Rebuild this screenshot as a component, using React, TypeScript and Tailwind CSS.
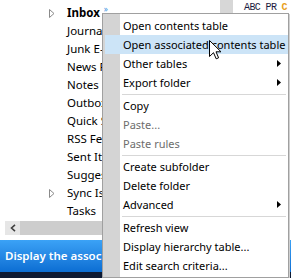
import React from "react";

type MenuEntry =
  | { kind: "item"; label: string; disabled?: boolean; submenu?: boolean; hot?: boolean }
  | { kind: "sep" };

const menu: MenuEntry[] = [
  { kind: "item", label: "Open contents table" },
  { kind: "item", label: "Open associated contents table", hot: true },
  { kind: "item", label: "Other tables", submenu: true },
  { kind: "item", label: "Export folder", submenu: true },
  { kind: "sep" },
  { kind: "item", label: "Copy" },
  { kind: "item", label: "Paste...", disabled: true },
  { kind: "item", label: "Paste rules", disabled: true },
  { kind: "sep" },
  { kind: "item", label: "Create subfolder" },
  { kind: "item", label: "Delete folder" },
  { kind: "item", label: "Advanced", submenu: true },
  { kind: "sep" },
  { kind: "item", label: "Refresh view" },
  { kind: "item", label: "Display hierarchy table..." },
  { kind: "item", label: "Edit search criteria..." },
];

const folders = [
  { name: "Inbox", bold: true, expand: true },
  { name: "Journal" },
  { name: "Junk E-mail" },
  { name: "News Feed" },
  { name: "Notes" },
  { name: "Outbox" },
  { name: "Quick Step Settings" },
  { name: "RSS Feeds" },
  { name: "Sent Items" },
  { name: "Suggested Contacts" },
  { name: "Sync Issues", expand: true },
  { name: "Tasks" },
];

const font = { fontFamily: '"Noto Sans", "Open Sans", Arial, sans-serif' };

function Expander() {
  return (
    <svg width="6" height="9" viewBox="0 0 6 9">
      <path d="M0.5 0.5 L5 4.5 L0.5 8.5 Z" fill="white" stroke="#8a8a8a" strokeWidth="1" />
    </svg>
  );
}

function SubArrow() {
  return (
    <svg width="4" height="7" viewBox="0 0 4 7" className="absolute right-[7px] top-[6px]">
      <path d="M0 0 L4 3.5 L0 7 Z" fill="#000" />
    </svg>
  );
}

function Cursor() {
  return (
    <svg width="13" height="20" viewBox="0 0 13 20" className="absolute left-[209px] top-[40px]">
      <path
        d="M0.5 0.5 L0.5 16.5 L4.5 12.7 L7.2 18.8 L9.6 17.8 L7 11.8 L12 11.8 Z"
        fill="#fff"
        stroke="#000"
        strokeWidth="1"
        strokeLinejoin="miter"
      />
    </svg>
  );
}

export default function App() {
  return (
    <div className="relative w-[291px] h-[278px] overflow-hidden bg-white flex flex-col text-[11px] text-black" style={font}>
      <div className="flex h-[240px]">
        <div className="w-[220px] flex flex-col">
          <ul className="pt-[4px] h-[221px]">
            {folders.map((f) => (
              <li key={f.name} className="h-[18px] flex items-center pl-[49px] whitespace-nowrap leading-none text-[11.5px]">
                <span className="w-[18px] shrink-0 flex items-center">{f.expand && <Expander />}</span>
                <span className={f.bold ? "font-bold" : ""}>{f.name}</span>
                {f.bold && <span className="ml-[4px] -mt-[8px] text-[8px] text-[#3b8fe0]">»</span>}
              </li>
            ))}
          </ul>
          <div className="ml-[5px] h-[14px] flex">
            <div className="w-[15px] bg-[#e6e6e6] flex items-center justify-center">
              <svg width="6" height="8" viewBox="0 0 6 8">
                <path d="M5 0.8 L1.5 4 L5 7.2" fill="none" stroke="#404040" strokeWidth="1.6" />
              </svg>
            </div>
            <div className="flex-1 bg-[#cdcdcd]" />
          </div>
        </div>
        <div className="w-[13px] bg-[#d7d7d7]" />
        <div className="flex-1 pl-[11px] pt-[3px] flex text-[10px] leading-none whitespace-nowrap" style={{ fontFamily: '"Liberation Mono", monospace' }}>
          <span className="text-[#1a1a40] tracking-[-0.6px]">ABC PR</span>
          <span className="ml-[5px] text-[#e8a020] font-bold">C</span>
        </div>
      </div>
      <div className="h-[32px] bg-gradient-to-b from-[#3ba2f6] to-[#0b6ed3] flex items-center pl-[5px] text-[11.5px] text-white font-semibold whitespace-nowrap">
        Display the associated contents table
      </div>
      <div className="flex-1 bg-[#0d1a33]" />

      <div className="absolute left-[102px] top-[13px] w-[187px] h-[265px] border border-[#a0a0a0] pl-[2px] pt-[2px] pb-[2px] bg-[linear-gradient(to_right,#d4d4d4_17px,#ffffff_17px)] shadow-[1px_1px_0_#d0d0d0]">
        {menu.map((m, i) =>
          m.kind === "sep" ? (
            <div key={i} className="h-[4px] flex items-center pl-[17px] pr-[2px]">
              <div className="h-px w-full bg-[#d7d7d7]" />
            </div>
          ) : (
            <div
              key={i}
              className={`relative h-[19px] flex items-center pl-[18px] whitespace-nowrap leading-none ${m.hot ? "bg-[#cce4f7]" : ""} ${m.disabled ? "text-[#6d6d6d]" : ""}`}
            >
              {m.label}
              {m.submenu && <SubArrow />}
            </div>
          )
        )}
      </div>
      <Cursor />
    </div>
  );
}
